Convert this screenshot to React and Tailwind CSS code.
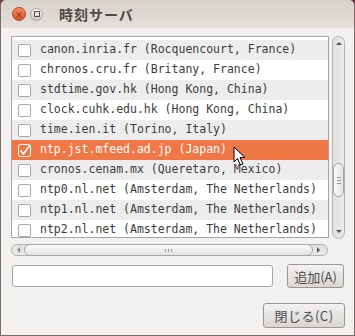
import React from 'react';

const rows = [
  'canon.inria.fr (Rocquencourt, France)',
  'chronos.cru.fr (Britany, France)',
  'stdtime.gov.hk (Hong Kong, China)',
  'clock.cuhk.edu.hk (Hong Kong, China)',
  'time.ien.it (Torino, Italy)',
  'ntp.jst.mfeed.ad.jp (Japan)',
  'cronos.cenam.mx (Queretaro, Mexico)',
  'ntp0.nl.net (Amsterdam, The Netherlands)',
  'ntp1.nl.net (Amsterdam, The Netherlands)',
  'ntp2.nl.net (Amsterdam, The Netherlands)',
];

const mono = { fontFamily: '"DejaVu Sans Mono", "Noto Sans CJK JP", monospace' };
const jp = { fontFamily: '"Noto Sans CJK JP", "Noto Sans", sans-serif' };

function Check({ on }) {
  if (on) {
    return (
      <svg width="13" height="13" viewBox="0 0 13 13" className="shrink-0">
        <rect x="0.5" y="0.5" width="12" height="12" rx="2" fill="none" stroke="#fff" />
        <path d="M2.5 6.5 L5.5 10 L12 1" fill="none" stroke="#fff" strokeWidth="1.6" />
      </svg>
    );
  }
  return <div className="w-[13px] h-[13px] shrink-0 rounded-[2px] border border-[#a9a9a9] bg-white" />;
}

function Cursor() {
  return (
    <svg width="14" height="20" viewBox="0 0 14 20" className="absolute left-[233px] top-[146px]">
      <path d="M1 1 L1 16 L4.5 12.5 L7.5 19 L10 18 L7 11.5 L12 11.5 Z" fill="#fff" stroke="#000" strokeWidth="1" />
    </svg>
  );
}

export default function App() {
  return (
    <div className="relative w-[355px] h-[336px] bg-[#6b3f4a] overflow-hidden">
      <div className="w-[355px] h-[336px] rounded-t-[6px] bg-[#f2f1f0] border-l border-r border-b border-[#7a6a66] flex flex-col overflow-hidden">
        {/* title bar */}
        <div className="h-[28px] shrink-0 flex items-center pl-[11px] bg-gradient-to-b from-[#d7d1c9] to-[#e4e0da]">
          <div className="w-[14px] h-[14px] rounded-full bg-gradient-to-b from-[#f58a5e] to-[#e0502a] border border-[#b04a2a] flex items-center justify-center text-[#6a2a14] text-[9px] leading-none" style={jp}>×</div>
          <div className="ml-[4px] w-[13px] h-[13px] rounded-full bg-gradient-to-b from-[#f6f4f2] to-[#cfcac4] border border-[#a8a29c] flex items-center justify-center">
            <div className="w-[6px] h-[6px] border border-[#555]" />
          </div>
          <div className="ml-[16px] text-[14px] font-bold text-[#4c4843] tracking-[1px] leading-none" style={jp}>時刻サーバ</div>
        </div>

        {/* body */}
        <div className="flex flex-col pl-[10px] pr-[9px]">
          <div className="mt-[8px] flex">
            <div className="w-[318px] h-[202px] border border-[#a7a6a4] bg-white overflow-hidden pt-[3px]">
              {rows.map((r, i) => {
                const sel = i === 5;
                const bg = sel ? 'bg-[#f07746] text-white' : i % 2 === 0 ? 'bg-[#ededed] text-[#3c3c3c]' : 'bg-white text-[#3c3c3c]';
                return (
                  <div key={r} className={`h-[20px] flex items-center pl-[6px] gap-[9px] ${bg}`}>
                    <Check on={sel} />
                    <span className="text-[11.5px] whitespace-nowrap leading-none" style={mono}>{r}</span>
                  </div>
                );
              })}
            </div>
            {/* vertical scrollbar */}
            <div className="ml-[3px] w-[13px] h-[203px] rounded-full border border-[#b5b3b0] bg-gradient-to-r from-[#e2e0de] to-[#ecebea] flex flex-col items-center">
              <div className="mt-[5px] w-0 h-0 border-l-[3px] border-r-[3px] border-b-[3px] border-l-transparent border-r-transparent border-b-[#555]" />
              <div className="mt-[118px] w-[11px] h-[34px] rounded-full border border-[#a9a7a4] bg-gradient-to-r from-[#fafafa] to-[#e6e4e2] flex flex-col items-center justify-center gap-[2px]">
                <div className="w-[4px] h-px bg-[#999]" />
                <div className="w-[4px] h-px bg-[#999]" />
                <div className="w-[4px] h-px bg-[#999]" />
              </div>
              <div className="mt-auto mb-[5px] w-0 h-0 border-l-[3px] border-r-[3px] border-t-[3px] border-l-transparent border-r-transparent border-t-[#555]" />
            </div>
          </div>

          {/* horizontal scrollbar */}
          <div className="mt-[5px] w-[317px] h-[12px] rounded-full border border-[#b5b3b0] bg-gradient-to-b from-[#e2e0de] to-[#ecebea] flex items-center">
            <div className="ml-[5px] w-0 h-0 border-t-[3px] border-b-[3px] border-r-[3px] border-t-transparent border-b-transparent border-r-[#888]" />
            <div className="ml-[4px] w-[289px] h-[12px] rounded-full border border-[#a9a7a4] bg-gradient-to-b from-[#fafafa] to-[#e6e4e2] flex items-center justify-center gap-[2px]">
              <div className="w-px h-[3px] bg-[#999]" />
              <div className="w-px h-[3px] bg-[#999]" />
              <div className="w-px h-[3px] bg-[#999]" />
            </div>
            <div className="ml-[4px] w-0 h-0 border-t-[3px] border-b-[3px] border-l-[3px] border-t-transparent border-b-transparent border-l-[#555]" />
          </div>

          {/* entry row */}
          <div className="mt-[8px] flex items-center">
            <div className="ml-[1px] w-[261px] h-[22px] rounded-[3px] border border-[#a6a4a1] bg-white" />
            <div className="ml-[14px] w-[57px] h-[24px] rounded-[3px] border border-[#9a9794] bg-gradient-to-b from-[#f4f3f2] to-[#d9d6d2] flex items-center justify-center text-[13px] text-[#4c4c4c] leading-none" style={jp}>追加(A)</div>
          </div>

          {/* close */}
          <div className="mt-[15px] flex justify-end">
            <div className="w-[82px] h-[25px] rounded-[3px] border border-[#9a9794] bg-gradient-to-b from-[#f4f3f2] to-[#d9d6d2] flex items-center justify-center text-[13px] text-[#4c4c4c] leading-none tracking-[0.5px]" style={jp}>閉じる(C)</div>
          </div>
        </div>
      </div>
      <Cursor />
    </div>
  );
}
